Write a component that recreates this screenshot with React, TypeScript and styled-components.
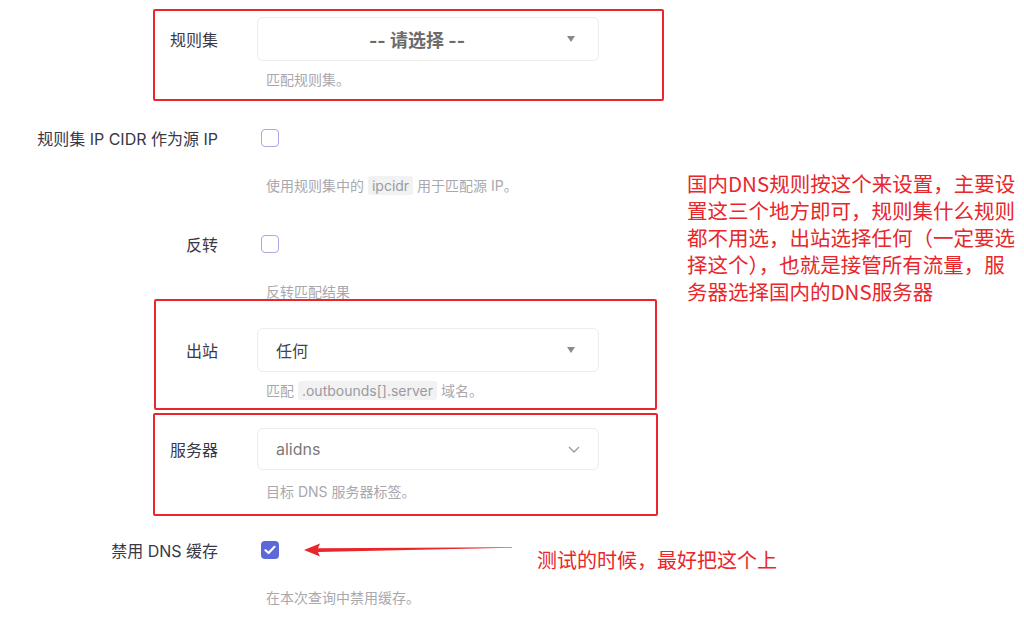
import React from "react";
import styled, { createGlobalStyle } from "styled-components";

const Global = createGlobalStyle`
  html, body { margin: 0; padding: 0; background: #ffffff; }
  body { font-family: Inter, "Noto Sans CJK SC", "Noto Sans", sans-serif; }
`;

const Page = styled.div`
  position: relative;
  width: 1024px;
  height: 621px;
  overflow: hidden;
  padding-top: 17px;
  box-sizing: border-box;
`;

const Group = styled.div`
  display: grid;
  grid-template-columns: 218px 342px;
  column-gap: 39px;
  margin-bottom: 26px;
`;

const Label = styled.div`
  height: 44px;
  display: flex;
  align-items: center;
  justify-content: flex-end;
  font-size: 16px;
  color: #383846;
  white-space: nowrap;
`;

const Control = styled.div`
  height: 44px;
  display: flex;
  align-items: center;
`;

const SelectBox = styled.div<{ $center?: boolean; $h?: number }>`
  position: relative;
  box-sizing: border-box;
  width: 342px;
  height: ${(p) => p.$h ?? 44}px;
  border: 1px solid #ececec;
  border-radius: 6px;
  background: #fff;
  display: flex;
  align-items: center;
  justify-content: ${(p) => (p.$center ? "center" : "flex-start")};
  padding: 0 40px 0 18px;
`;

const Placeholder = styled.span`
  font-size: 18px;
  font-weight: 700;
  color: #6b6b6b;
`;

const Value = styled.span<{ $muted?: boolean }>`
  font-size: 16px;
  color: ${(p) => (p.$muted ? "#7a7a7a" : "#444")};
`;

const Caret = styled.span`
  position: absolute;
  right: 23px;
  top: 50%;
  margin-top: -3px;
  width: 0;
  height: 0;
  border-left: 4px solid transparent;
  border-right: 4px solid transparent;
  border-top: 6px solid #8a8a8a;
`;

const Chevron = styled.svg`
  position: absolute;
  right: 6px;
  top: 50%;
  margin-top: -4px;
`;

const Check = styled.span<{ $on?: boolean }>`
  box-sizing: border-box;
  width: 18px;
  height: 18px;
  margin-left: 4px;
  border-radius: 4px;
  border: ${(p) => (p.$on ? "none" : "1.5px solid #aca7e6")};
  background: ${(p) => (p.$on ? "#5d69d9" : "#fff")};
  display: flex;
  align-items: center;
  justify-content: center;
`;

const Help = styled.div<{ $mt: number }>`
  grid-column: 2;
  margin-top: ${(p) => p.$mt}px;
  padding-left: 9px;
  font-size: 14px;
  line-height: 20px;
  color: #a8a8ae;
  white-space: nowrap;
`;

const Code = styled.span`
  background: #f2f2f3;
  border-radius: 3px;
  padding: 1px 4px;
  color: #9a9aa0;
`;

const RedBox = styled.div`
  position: absolute;
  box-sizing: border-box;
  border: 2.5px solid #e8262b;
  border-radius: 2px;
  pointer-events: none;
`;

const Note = styled.div`
  position: absolute;
  left: 687px;
  top: 170px;
  font-family: "Noto Sans CJK SC", sans-serif;
  font-size: 20.5px;
  line-height: 27px;
  color: #e8262b;
  white-space: nowrap;
`;

const NoteLine = styled.div``;

const Hint = styled.div`
  position: absolute;
  left: 537px;
  top: 546px;
  font-family: "Noto Sans CJK SC", sans-serif;
  font-size: 20px;
  line-height: 28px;
  color: #e8262b;
  white-space: nowrap;
`;

const Arrow = styled.svg`
  position: absolute;
  left: 300px;
  top: 540px;
`;

export default function App() {
  return (
    <Page>
      <Global />
      <Group>
        <Label>规则集</Label>
        <Control>
          <SelectBox $center>
            <Placeholder>-- 请选择 --</Placeholder>
            <Caret />
          </SelectBox>
        </Control>
        <Help $mt={9}>匹配规则集。</Help>
      </Group>

      <Group>
        <Label>规则集 IP CIDR 作为源 IP</Label>
        <Control>
          <Check />
        </Control>
        <Help $mt={16}>
          使用规则集中的 <Code>ipcidr</Code> 用于匹配源 IP。
        </Help>
      </Group>

      <Group>
        <Label>反转</Label>
        <Control>
          <Check />
        </Control>
        <Help $mt={16}>反转匹配结果</Help>
      </Group>

      <Group>
        <Label>出站</Label>
        <Control>
          <SelectBox>
            <Value>任何</Value>
            <Caret />
          </SelectBox>
        </Control>
        <Help $mt={9}>
          匹配 <Code>.outbounds[].server</Code> 域名。
        </Help>
      </Group>

      <Group>
        <Label>服务器</Label>
        <Control>
          <SelectBox $h={42}>
            <Value $muted>alidns</Value>
            <Chevron width="24" height="10" viewBox="0 0 24 10">
              <polyline
                points="1,2 6,7 11,2"
                fill="none"
                stroke="#9a9a9a"
                strokeWidth="1.3"
              />
            </Chevron>
          </SelectBox>
        </Control>
        <Help $mt={11}>目标 DNS 服务器标签。</Help>
      </Group>

      <Group>
        <Label>禁用 DNS 缓存</Label>
        <Control>
          <Check $on>
            <svg width="12" height="10" viewBox="0 0 12 10">
              <polyline
                points="1.5,5.2 4.6,8 10.5,1.8"
                fill="none"
                stroke="#fff"
                strokeWidth="2.2"
                strokeLinecap="round"
                strokeLinejoin="round"
              />
            </svg>
          </Check>
        </Control>
        <Help $mt={16}>在本次查询中禁用缓存。</Help>
      </Group>

      <RedBox style={{ left: 153, top: 9, width: 511, height: 92 }} />
      <RedBox style={{ left: 154, top: 299, width: 503, height: 111 }} />
      <RedBox style={{ left: 153, top: 413, width: 505, height: 103 }} />

      <Note>
        <NoteLine>国内DNS规则按这个来设置，主要设</NoteLine>
        <NoteLine>置这三个地方即可，规则集什么规则</NoteLine>
        <NoteLine>都不用选，出站选择任何（一定要选</NoteLine>
        <NoteLine>择这个），也就是接管所有流量，服</NoteLine>
        <NoteLine>务器选择国内的DNS服务器</NoteLine>
      </Note>

      <Arrow width="212" height="20" viewBox="0 0 212 20">
        <polygon points="4,10 20,3.5 18,8.2 212,7.2 212,7.8 18,12 20,16.5" fill="#e8262b" />
      </Arrow>
      <Hint>测试的时候，最好把这个上</Hint>
    </Page>
  );
}
